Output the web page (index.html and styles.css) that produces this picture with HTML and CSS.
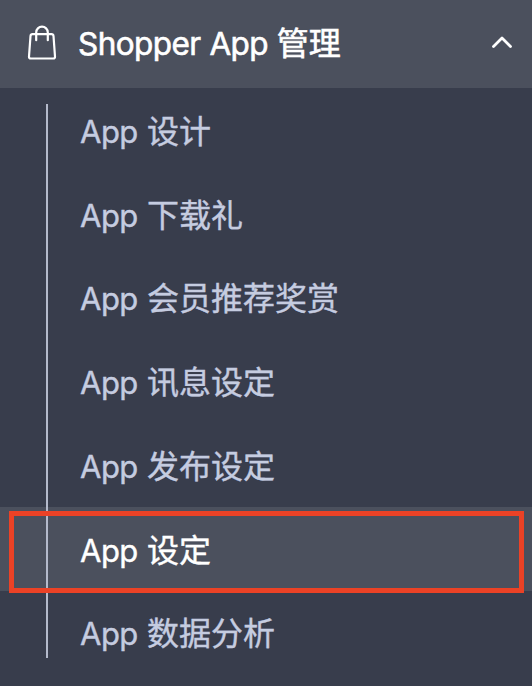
FILE: index.html
```html
<!DOCTYPE html>
<html lang="zh-CN">
<head>
<meta charset="utf-8">
<title>Shopper App 管理</title>
<link rel="stylesheet" href="styles.css">
</head>
<body>
<nav class="sidebar">
  <button class="header">
    <svg class="bag" viewBox="0 0 32 38" width="32" height="38"><path d="M6.5 9.2h19q1.8 0 2 1.8l1.5 20.5q.2 2-1.8 2H4.8q-2 0-1.8-2L4.500 11q.2-1.800 2-1.800zM10.200 15.200V7.500a5.800 5.800 0 0 1 11.600 0v7.700"/></svg>
    <span class="title"><span class="latin">Shopper App </span>管理</span>
    <svg class="chevron" viewBox="0 0 22 14" width="22" height="14"><path d="M2.500 10.500l8.500-8.500 8.500 8.500"/></svg>
  </button>
  <ul class="menu">
    <li class="item"><a><span class="latin">App </span>设计</a></li>
    <li class="item"><a><span class="latin">App </span>下载礼</a></li>
    <li class="item"><a><span class="latin">App </span>会员推荐奖赏</a></li>
    <li class="item"><a><span class="latin">App </span>讯息设定</a></li>
    <li class="item"><a><span class="latin">App </span>发布设定</a></li>
    <li class="item active"><a><span class="latin">App </span>设定</a></li>
    <li class="item"><a><span class="latin">App </span>数据分析</a></li>
  </ul>
</nav>
</body>
</html>
```
FILE: styles.css
```css
*, *::before, *::after { box-sizing: border-box; }
body { margin: 0; background: #383d4c; font-family: Inter, "Noto Sans CJK SC", sans-serif; }
.sidebar { height: 686px; overflow: hidden; }
.header { display: flex; align-items: center; width: 100%; height: 88px; padding: 0 19px 4px 26px; border: 0; background: #4b505d; color: #fff; font: inherit; font-size: 32px; text-align: left; }
.title { flex: 1; margin-left: 20px; padding-bottom: 3px; white-space: nowrap; -webkit-text-stroke: .6px currentColor; }
.latin { font-size: 31.5px; letter-spacing: -.55px; word-spacing: .4px; }
svg { fill: none; stroke: #fff; stroke-width: 2.2; stroke-linejoin: round; stroke-linecap: round; }
.bag { margin-top: 4px; }
.chevron { stroke-width: 2.8; margin-top: 1px; }
.menu { position: relative; margin: 0; padding: 0; list-style: none; }
.menu::before { content: ""; position: absolute; z-index: 1; left: 46px; top: 16px; width: 2px; height: 554px; background: #b4bacb; }
.item { position: relative; display: flex; align-items: center; height: 83.8px; padding: 0 0 2.4px 80px; color: #c5cce0; font-size: 32px; white-space: nowrap; -webkit-text-stroke: .4px currentColor; }
.item .latin { font-size: 31px; letter-spacing: -.5px; word-spacing: .9px; }
.active { background: #4b505d; color: #fff; }
.active::after { content: ""; position: absolute; z-index: 2; left: 9px; right: 8px; top: 4px; height: 82px; border: 5px solid #eb4226; }
```
